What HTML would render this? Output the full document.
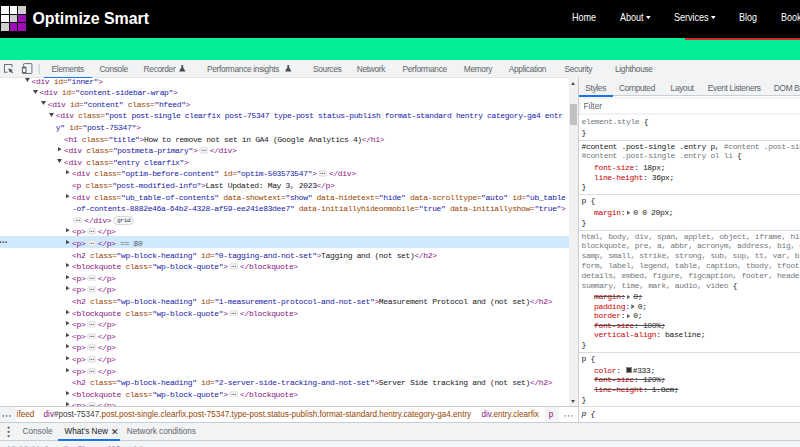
<!DOCTYPE html>
<html><head><meta charset="utf-8">
<style>
*{box-sizing:border-box}
html,body{margin:0;padding:0;width:800px;height:447px;overflow:hidden;background:#fff;position:relative;font-family:"Liberation Sans",sans-serif}
.abs{position:absolute}
#hdr{position:absolute;left:0;top:0;width:800px;height:38px;background:#000}
#green{position:absolute;left:0;top:38px;width:800px;height:22px;background:#03ec96}
#red{position:absolute;left:685px;top:38px;width:115px;height:2px;background:#d42a2a}
.logo{position:absolute;left:32.5px;top:7.8px;color:#fff;font-weight:bold;font-size:15.9px;line-height:22px;white-space:nowrap}
.nav{position:absolute;top:10.5px;color:#fff;font-size:10.1px;line-height:14px;white-space:nowrap;transform:scaleX(0.895);transform-origin:0 0}
.caret{position:absolute;top:16px;width:0;height:0;border-left:2.2px solid transparent;border-right:2.2px solid transparent;border-top:2.6px solid #fff}
#tool{position:absolute;left:0;top:60px;width:800px;height:17px;background:#f1f3f4}
#tline{position:absolute;left:0;top:77px;width:569px;height:1.3px;background:#e1e3e6}
.tb{position:absolute;top:63.8px;font-size:8.4px;letter-spacing:-0.33px;line-height:10px;color:#5f6368;white-space:nowrap}
.tb.act{color:#202124}
.flask{position:absolute;top:65.1px}
#elunder{position:absolute;left:44px;top:76.8px;width:48px;height:1.4px;background:#1a73e8}
#els{position:absolute;left:0;top:77px;width:569px;height:329px;overflow:hidden;background:#fff}
.row{position:absolute;height:11.5px;line-height:11.5px;font-family:"Liberation Mono",monospace;font-size:8.0px;letter-spacing:-0.3562px;white-space:pre;color:#202124}
.t{color:#881280} .a{color:#994500} .v{color:#1a1aa6} .x{color:#202124}
.hl{position:absolute;left:0;width:569px;height:11.6px;background:#cfe8fc}
.dots{position:absolute;left:1px;height:11.5px;line-height:10px;font-size:9px;color:#5f6368;letter-spacing:-0.5px}
.tri{position:absolute}
.tri.down{border-left:2.5px solid transparent;border-right:2.5px solid transparent;border-top:3.9px solid #5f6368;margin-top:2.6px;margin-left:-0.6px}
.tri.right{border-top:2.2px solid transparent;border-bottom:2.2px solid transparent;border-left:3.6px solid #5f6368;margin-top:2.2px;margin-left:0.3px}
.ell{display:inline-block;vertical-align:-0.6px;margin:0 1.6px 0 1.15px}
.badge{display:inline-block;box-sizing:border-box;width:21px;height:9.4px;line-height:8.4px;text-align:center;margin-left:2.05px;border:0.7px solid #d5d7db;background:#f8f9fa;border-radius:4.7px;font-size:6.2px;letter-spacing:-0.35px;color:#3c4043;vertical-align:1.2px}
.s0{color:#5f6368}
.s0 i{font-style:italic}
#sb{position:absolute;left:569px;top:77px;width:9px;height:329px;background:#f1f1f1}
#thumb{position:absolute;left:570px;top:104px;width:7px;height:21px;background:#c1c1c1}
.sbarr{position:absolute;left:571px;width:0;height:0;border-left:2.5px solid transparent;border-right:2.5px solid transparent}
#divider{position:absolute;left:578px;top:77px;width:1px;height:345px;background:#cacdd1}
#stabs{position:absolute;left:579px;top:77px;width:221px;height:19px;background:#f1f3f4;border-bottom:1px solid #cacdd1}
.st2{position:absolute;top:83.3px;font-size:8.4px;letter-spacing:-0.33px;line-height:10px;color:#5f6368;white-space:nowrap}
.st2.act{color:#202124}
#stunder{position:absolute;left:579px;top:95px;width:34px;height:2px;background:#1a73e8}
#filterrow{position:absolute;left:579px;top:97px;width:221px;height:18px;background:#f1f3f4}
#filter{position:absolute;left:580.5px;top:98.5px;width:230px;height:14.5px;background:#fff}
.ftxt{position:absolute;left:583.5px;top:101.2px;font-size:8.4px;line-height:10px;color:#5f6368}
#styles{position:absolute;left:579px;top:115px;width:221px;height:307px;background:#fff;overflow:hidden}
.srow{position:absolute;height:10px;line-height:10px;font-family:"Liberation Mono",monospace;font-size:8.0px;letter-spacing:-0.3562px;white-space:pre;color:#202124}
.sep{position:absolute;left:0;width:221px;height:1px;background:#dadce0}
.sd{color:#202124} .sg{color:#74787d}
.pn{color:#c80000}
.st{text-decoration:line-through;text-decoration-color:#4d5156;text-decoration-thickness:0.8px}
.arr{display:inline-block;width:3.5px;height:4.6px;margin:0 3.0px 0 1.7px;vertical-align:-0.2px;background:#5f6368;clip-path:polygon(0 0,100% 50%,0 100%)}
.sw{display:inline-block;width:6px;height:6px;background:#333;border:0.5px solid #888;margin:0 0.6px 0 1px;vertical-align:-0.5px}
#crumbs{position:absolute;left:0;top:406px;width:578px;height:16px;background:#fff;border-top:1px solid #cacdd1}
.cr{position:absolute;top:410.3px;font-size:8.15px;line-height:10px;white-space:nowrap}
#drawer{position:absolute;left:0;top:422px;width:800px;height:19px;background:#f1f3f4;border-top:1px solid #cacdd1;border-bottom:1px solid #cacdd1}
.dr{position:absolute;top:427.3px;font-size:8.2px;line-height:10px;color:#5f6368;white-space:nowrap}
#drunder{position:absolute;left:58px;top:439.3px;width:62px;height:1.8px;background:#1a73e8}
#below{position:absolute;left:0;top:441px;width:800px;height:6px;background:#f3f4f5}
</style></head><body>
<div id=hdr></div>
<div id=green></div>
<div id=red></div>
<div style="position:absolute;left:1.0px;top:6.0px;width:7.6px;height:7.6px;background:#fff"></div><div style="position:absolute;left:9.5px;top:6.0px;width:7.6px;height:7.6px;background:#fff"></div><div style="position:absolute;left:18.0px;top:6.0px;width:7.6px;height:7.6px;background:#cfcfcf"></div><div style="position:absolute;left:1.0px;top:14.5px;width:7.6px;height:7.6px;background:#fff"></div><div style="position:absolute;left:9.5px;top:14.5px;width:7.6px;height:7.6px;background:#cfcfcf"></div><div style="position:absolute;left:18.0px;top:14.5px;width:7.6px;height:7.6px;background:#a10cb9"></div><div style="position:absolute;left:1.0px;top:23.0px;width:7.6px;height:7.6px;background:#cfcfcf"></div><div style="position:absolute;left:9.5px;top:23.0px;width:7.6px;height:7.6px;background:#a10cb9"></div><div style="position:absolute;left:18.0px;top:23.0px;width:7.6px;height:7.6px;background:#a10cb9"></div>
<div class=logo>Optimize Smart</div>
<div class=nav style="left:572px">Home</div>
<div class=nav style="left:619.7px">About</div><svg style="position:absolute;left:645.8px;top:15.8px" width="5" height="4"><polygon points="0,0 4.6,0 2.3,3.3" fill="#fff"/></svg>
<div class=nav style="left:674px">Services</div><svg style="position:absolute;left:710.8px;top:15.8px" width="5" height="4"><polygon points="0,0 4.6,0 2.3,3.3" fill="#fff"/></svg>
<div class=nav style="left:739px">Blog</div>
<div class=nav style="left:780.8px">Book Consultation</div>
<div id=tool></div>
<svg style="position:absolute;left:0;top:60px" width="42" height="16" viewBox="0 60 42 16">
<path d="M7.5 72.3H4.5V64.5H11.2Q12 64.5 12 65.3V67.2" fill="none" stroke="#6d7175" stroke-width="1.05"/>
<path d="M8.3 68.3L13 69.9L11.3 70.6L13.2 72.5L12.4 73.3L10.5 71.4L9.9 73.1Z" fill="#4a4d51"/>
<path d="M23.6 66.6V64.2Q23.6 63.6 24.2 63.6H31.2Q31.9 63.6 31.9 64.3V72.9Q31.9 73.5 31.2 73.5H26" fill="none" stroke="#6d7175" stroke-width="1"/>
<rect x="22.4" y="67.1" width="3.6" height="6.1" rx="0.6" fill="none" stroke="#4a4d51" stroke-width="0.9"/>
<rect x="22.4" y="67.1" width="3.6" height="1.2" fill="#4a4d51"/><rect x="22.4" y="72.2" width="3.6" height="1.1" fill="#4a4d51"/>
<rect x="38.7" y="63.5" width="0.8" height="10.5" fill="#b9bcc0"/>
</svg>
<div class=tb act style="left:51.6px">Elements</div><div class=tb style="left:99.4px">Console</div><div class=tb style="left:143.6px">Recorder</div><svg class=flask viewBox="0 0 7 7" width="6.5" height="6.5" style="left:179.2px"><path d="M2.2 0.3h2.6v0.6h-0.4v1.9l2.3 3.6v0.6h-6.4v-0.6l2.3-3.6v-1.9h-0.4z" fill="#44474b"/></svg><div class=tb style="left:207px">Performance insights</div><svg class=flask viewBox="0 0 7 7" width="6.5" height="6.5" style="left:285.2px"><path d="M2.2 0.3h2.6v0.6h-0.4v1.9l2.3 3.6v0.6h-6.4v-0.6l2.3-3.6v-1.9h-0.4z" fill="#44474b"/></svg><div class=tb style="left:313px">Sources</div><div class=tb style="left:356.75px">Network</div><div class=tb style="left:402.5px">Performance</div><div class=tb style="left:463.75px">Memory</div><div class=tb style="left:508.75px">Application</div><div class=tb style="left:564.5px">Security</div><div class=tb style="left:615px">Lighthouse</div>
<div id=els>
<svg class=tri style="top:1.09px;left:24.80px" width="6" height="5" viewBox="0 0 6 5"><polygon points="0,0 5,0 2.5,4" fill="#44474b"/></svg>
<div class=row style="top:-1.31px;left:31.50px"><span class=t>&lt;div</span> <span class=a>id</span><span class=a>=</span><span class=v>&quot;inner&quot;</span><span class=t>&gt;</span></div>
<svg class=tri style="top:12.69px;left:32.92px" width="6" height="5" viewBox="0 0 6 5"><polygon points="0,0 5,0 2.5,4" fill="#44474b"/></svg>
<div class=row style="top:10.29px;left:39.62px"><span class=t>&lt;div</span> <span class=a>id</span><span class=a>=</span><span class=v>&quot;content-sidebar-wrap&quot;</span><span class=t>&gt;</span></div>
<svg class=tri style="top:24.29px;left:41.04px" width="6" height="5" viewBox="0 0 6 5"><polygon points="0,0 5,0 2.5,4" fill="#44474b"/></svg>
<div class=row style="top:21.89px;left:47.74px"><span class=t>&lt;div</span> <span class=a>id</span><span class=a>=</span><span class=v>&quot;content&quot;</span> <span class=a>class</span><span class=a>=</span><span class=v>&quot;hfeed&quot;</span><span class=t>&gt;</span></div>
<svg class=tri style="top:35.89px;left:49.16px" width="6" height="5" viewBox="0 0 6 5"><polygon points="0,0 5,0 2.5,4" fill="#44474b"/></svg>
<div class=row style="top:33.49px;left:55.86px"><span class=t>&lt;div</span> <span class=a>class</span><span class=a>=</span><span class=v>&quot;post post-single clearfix post-75347 type-post status-publish format-standard hentry category-ga4 entr</span></div>
<div class=row style="top:45.09px;left:55.86px"><span class=v>y&quot;</span> <span class=a>id</span><span class=a>=</span><span class=v>&quot;post-75347&quot;</span><span class=t>&gt;</span></div>
<div class=row style="top:56.69px;left:63.98px"><span class=t>&lt;h1</span> <span class=a>class</span><span class=a>=</span><span class=v>&quot;title&quot;</span><span class=t>&gt;</span><span class=x>How to remove not set in GA4 (Google Analytics 4)</span><span class=t>&lt;/h1&gt;</span></div>
<svg class=tri style="top:70.29px;left:58.28px" width="5" height="6" viewBox="0 0 5 6"><polygon points="0,0 3.6,2.15 0,4.3" fill="#44474b"/></svg>
<div class=row style="top:68.29px;left:63.98px"><span class=t>&lt;div</span> <span class=a>class</span><span class=a>=</span><span class=v>&quot;postmeta-primary&quot;</span><span class=t>&gt;</span><svg class=ell width="9.6" height="6.6" viewBox="0 0 9.6 6.6"><rect x="0.35" y="0.35" width="8.9" height="5.9" rx="2.95" fill="#f1f3f4" stroke="#d5d7db" stroke-width="0.7"/><circle cx="3.1" cy="3.3" r="0.62" fill="#5f6368"/><circle cx="4.8" cy="3.3" r="0.62" fill="#5f6368"/><circle cx="6.5" cy="3.3" r="0.62" fill="#5f6368"/></svg><span class=t>&lt;/div&gt;</span></div>
<svg class=tri style="top:82.29px;left:57.28px" width="6" height="5" viewBox="0 0 6 5"><polygon points="0,0 5,0 2.5,4" fill="#44474b"/></svg>
<div class=row style="top:79.89px;left:63.98px"><span class=t>&lt;div</span> <span class=a>class</span><span class=a>=</span><span class=v>&quot;entry clearfix&quot;</span><span class=t>&gt;</span></div>
<svg class=tri style="top:93.49px;left:66.40px" width="5" height="6" viewBox="0 0 5 6"><polygon points="0,0 3.6,2.15 0,4.3" fill="#44474b"/></svg>
<div class=row style="top:91.49px;left:72.10px"><span class=t>&lt;div</span> <span class=a>class</span><span class=a>=</span><span class=v>&quot;optim-before-content&quot;</span> <span class=a>id</span><span class=a>=</span><span class=v>&quot;optim-503573547&quot;</span><span class=t>&gt;</span><svg class=ell width="9.6" height="6.6" viewBox="0 0 9.6 6.6"><rect x="0.35" y="0.35" width="8.9" height="5.9" rx="2.95" fill="#f1f3f4" stroke="#d5d7db" stroke-width="0.7"/><circle cx="3.1" cy="3.3" r="0.62" fill="#5f6368"/><circle cx="4.8" cy="3.3" r="0.62" fill="#5f6368"/><circle cx="6.5" cy="3.3" r="0.62" fill="#5f6368"/></svg><span class=t>&lt;/div&gt;</span></div>
<div class=row style="top:103.09px;left:72.10px"><span class=t>&lt;p</span> <span class=a>class</span><span class=a>=</span><span class=v>&quot;post-modified-info&quot;</span><span class=t>&gt;</span><span class=x>Last Updated: May 3, 2023</span><span class=t>&lt;/p&gt;</span></div>
<svg class=tri style="top:116.69px;left:66.40px" width="5" height="6" viewBox="0 0 5 6"><polygon points="0,0 3.6,2.15 0,4.3" fill="#44474b"/></svg>
<div class=row style="top:114.69px;left:72.10px"><span class=t>&lt;div</span> <span class=a>class</span><span class=a>=</span><span class=v>&quot;ub_table-of-contents&quot;</span> <span class=a>data-showtext</span><span class=a>=</span><span class=v>&quot;show&quot;</span> <span class=a>data-hidetext</span><span class=a>=</span><span class=v>&quot;hide&quot;</span> <span class=a>data-scrolltype</span><span class=a>=</span><span class=v>&quot;auto&quot;</span> <span class=a>id</span><span class=a>=</span><span class=v>&quot;ub_table</span></div>
<div class=row style="top:126.29px;left:72.10px"><span class=v>-of-contents-8882e46a-64b2-4328-af59-ee241e83dee7&quot;</span> <span class=a>data-initiallyhideonmobile</span><span class=a>=</span><span class=v>&quot;true&quot;</span> <span class=a>data-initiallyshow</span><span class=a>=</span><span class=v>&quot;true&quot;</span><span class=t>&gt;</span></div>
<div class=row style="top:137.89px;left:72.10px"><svg class=ell width="9.6" height="6.6" viewBox="0 0 9.6 6.6"><rect x="0.35" y="0.35" width="8.9" height="5.9" rx="2.95" fill="#f1f3f4" stroke="#d5d7db" stroke-width="0.7"/><circle cx="3.1" cy="3.3" r="0.62" fill="#5f6368"/><circle cx="4.8" cy="3.3" r="0.62" fill="#5f6368"/><circle cx="6.5" cy="3.3" r="0.62" fill="#5f6368"/></svg><span class=t>&lt;/div&gt;</span><span class=badge>grid</span></div>
<svg class=tri style="top:151.49px;left:66.40px" width="5" height="6" viewBox="0 0 5 6"><polygon points="0,0 3.6,2.15 0,4.3" fill="#44474b"/></svg>
<div class=row style="top:149.49px;left:72.10px"><span class=t>&lt;p&gt;</span><svg class=ell width="9.6" height="6.6" viewBox="0 0 9.6 6.6"><rect x="0.35" y="0.35" width="8.9" height="5.9" rx="2.95" fill="#f1f3f4" stroke="#d5d7db" stroke-width="0.7"/><circle cx="3.1" cy="3.3" r="0.62" fill="#5f6368"/><circle cx="4.8" cy="3.3" r="0.62" fill="#5f6368"/><circle cx="6.5" cy="3.3" r="0.62" fill="#5f6368"/></svg><span class=t>&lt;/p&gt;</span></div>
<div class=hl style="top:159.39px"></div>
<svg style="position:absolute;left:0;top:164.30px" width="8" height="3"><rect x="-0.2" y="0.3" width="1.5" height="1.7" fill="#5a5e62"/><rect x="2.6" y="0.3" width="1.5" height="1.7" fill="#5a5e62"/><rect x="5.3" y="0.3" width="1.5" height="1.7" fill="#5a5e62"/></svg>
<svg class=tri style="top:163.09px;left:66.40px" width="5" height="6" viewBox="0 0 5 6"><polygon points="0,0 3.6,2.15 0,4.3" fill="#44474b"/></svg>
<div class=row style="top:161.09px;left:72.10px"><span class=t>&lt;p&gt;</span><svg class=ell width="9.6" height="6.6" viewBox="0 0 9.6 6.6"><rect x="0.35" y="0.35" width="8.9" height="5.9" rx="2.95" fill="#f1f3f4" stroke="#d5d7db" stroke-width="0.7"/><circle cx="3.1" cy="3.3" r="0.62" fill="#5f6368"/><circle cx="4.8" cy="3.3" r="0.62" fill="#5f6368"/><circle cx="6.5" cy="3.3" r="0.62" fill="#5f6368"/></svg><span class=t>&lt;/p&gt;</span> <span class=s0>== <i>$0</i></span></div>
<div class=row style="top:172.69px;left:72.10px"><span class=t>&lt;h2</span> <span class=a>class</span><span class=a>=</span><span class=v>&quot;wp-block-heading&quot;</span> <span class=a>id</span><span class=a>=</span><span class=v>&quot;0-tagging-and-not-set&quot;</span><span class=t>&gt;</span><span class=x>Tagging and (not set)</span><span class=t>&lt;/h2&gt;</span></div>
<svg class=tri style="top:186.29px;left:66.40px" width="5" height="6" viewBox="0 0 5 6"><polygon points="0,0 3.6,2.15 0,4.3" fill="#44474b"/></svg>
<div class=row style="top:184.29px;left:72.10px"><span class=t>&lt;blockquote</span> <span class=a>class</span><span class=a>=</span><span class=v>&quot;wp-block-quote&quot;</span><span class=t>&gt;</span><svg class=ell width="9.6" height="6.6" viewBox="0 0 9.6 6.6"><rect x="0.35" y="0.35" width="8.9" height="5.9" rx="2.95" fill="#f1f3f4" stroke="#d5d7db" stroke-width="0.7"/><circle cx="3.1" cy="3.3" r="0.62" fill="#5f6368"/><circle cx="4.8" cy="3.3" r="0.62" fill="#5f6368"/><circle cx="6.5" cy="3.3" r="0.62" fill="#5f6368"/></svg><span class=t>&lt;/blockquote&gt;</span></div>
<svg class=tri style="top:197.89px;left:66.40px" width="5" height="6" viewBox="0 0 5 6"><polygon points="0,0 3.6,2.15 0,4.3" fill="#44474b"/></svg>
<div class=row style="top:195.89px;left:72.10px"><span class=t>&lt;p&gt;</span><svg class=ell width="9.6" height="6.6" viewBox="0 0 9.6 6.6"><rect x="0.35" y="0.35" width="8.9" height="5.9" rx="2.95" fill="#f1f3f4" stroke="#d5d7db" stroke-width="0.7"/><circle cx="3.1" cy="3.3" r="0.62" fill="#5f6368"/><circle cx="4.8" cy="3.3" r="0.62" fill="#5f6368"/><circle cx="6.5" cy="3.3" r="0.62" fill="#5f6368"/></svg><span class=t>&lt;/p&gt;</span></div>
<svg class=tri style="top:209.49px;left:66.40px" width="5" height="6" viewBox="0 0 5 6"><polygon points="0,0 3.6,2.15 0,4.3" fill="#44474b"/></svg>
<div class=row style="top:207.49px;left:72.10px"><span class=t>&lt;p&gt;</span><svg class=ell width="9.6" height="6.6" viewBox="0 0 9.6 6.6"><rect x="0.35" y="0.35" width="8.9" height="5.9" rx="2.95" fill="#f1f3f4" stroke="#d5d7db" stroke-width="0.7"/><circle cx="3.1" cy="3.3" r="0.62" fill="#5f6368"/><circle cx="4.8" cy="3.3" r="0.62" fill="#5f6368"/><circle cx="6.5" cy="3.3" r="0.62" fill="#5f6368"/></svg><span class=t>&lt;/p&gt;</span></div>
<div class=row style="top:219.09px;left:72.10px"><span class=t>&lt;h2</span> <span class=a>class</span><span class=a>=</span><span class=v>&quot;wp-block-heading&quot;</span> <span class=a>id</span><span class=a>=</span><span class=v>&quot;1-measurement-protocol-and-not-set&quot;</span><span class=t>&gt;</span><span class=x>Measurement Protocol and (not set)</span><span class=t>&lt;/h2&gt;</span></div>
<svg class=tri style="top:232.69px;left:66.40px" width="5" height="6" viewBox="0 0 5 6"><polygon points="0,0 3.6,2.15 0,4.3" fill="#44474b"/></svg>
<div class=row style="top:230.69px;left:72.10px"><span class=t>&lt;blockquote</span> <span class=a>class</span><span class=a>=</span><span class=v>&quot;wp-block-quote&quot;</span><span class=t>&gt;</span><svg class=ell width="9.6" height="6.6" viewBox="0 0 9.6 6.6"><rect x="0.35" y="0.35" width="8.9" height="5.9" rx="2.95" fill="#f1f3f4" stroke="#d5d7db" stroke-width="0.7"/><circle cx="3.1" cy="3.3" r="0.62" fill="#5f6368"/><circle cx="4.8" cy="3.3" r="0.62" fill="#5f6368"/><circle cx="6.5" cy="3.3" r="0.62" fill="#5f6368"/></svg><span class=t>&lt;/blockquote&gt;</span></div>
<svg class=tri style="top:244.29px;left:66.40px" width="5" height="6" viewBox="0 0 5 6"><polygon points="0,0 3.6,2.15 0,4.3" fill="#44474b"/></svg>
<div class=row style="top:242.29px;left:72.10px"><span class=t>&lt;p&gt;</span><svg class=ell width="9.6" height="6.6" viewBox="0 0 9.6 6.6"><rect x="0.35" y="0.35" width="8.9" height="5.9" rx="2.95" fill="#f1f3f4" stroke="#d5d7db" stroke-width="0.7"/><circle cx="3.1" cy="3.3" r="0.62" fill="#5f6368"/><circle cx="4.8" cy="3.3" r="0.62" fill="#5f6368"/><circle cx="6.5" cy="3.3" r="0.62" fill="#5f6368"/></svg><span class=t>&lt;/p&gt;</span></div>
<svg class=tri style="top:255.89px;left:66.40px" width="5" height="6" viewBox="0 0 5 6"><polygon points="0,0 3.6,2.15 0,4.3" fill="#44474b"/></svg>
<div class=row style="top:253.89px;left:72.10px"><span class=t>&lt;p&gt;</span><svg class=ell width="9.6" height="6.6" viewBox="0 0 9.6 6.6"><rect x="0.35" y="0.35" width="8.9" height="5.9" rx="2.95" fill="#f1f3f4" stroke="#d5d7db" stroke-width="0.7"/><circle cx="3.1" cy="3.3" r="0.62" fill="#5f6368"/><circle cx="4.8" cy="3.3" r="0.62" fill="#5f6368"/><circle cx="6.5" cy="3.3" r="0.62" fill="#5f6368"/></svg><span class=t>&lt;/p&gt;</span></div>
<svg class=tri style="top:267.49px;left:66.40px" width="5" height="6" viewBox="0 0 5 6"><polygon points="0,0 3.6,2.15 0,4.3" fill="#44474b"/></svg>
<div class=row style="top:265.49px;left:72.10px"><span class=t>&lt;p&gt;</span><svg class=ell width="9.6" height="6.6" viewBox="0 0 9.6 6.6"><rect x="0.35" y="0.35" width="8.9" height="5.9" rx="2.95" fill="#f1f3f4" stroke="#d5d7db" stroke-width="0.7"/><circle cx="3.1" cy="3.3" r="0.62" fill="#5f6368"/><circle cx="4.8" cy="3.3" r="0.62" fill="#5f6368"/><circle cx="6.5" cy="3.3" r="0.62" fill="#5f6368"/></svg><span class=t>&lt;/p&gt;</span></div>
<svg class=tri style="top:279.09px;left:66.40px" width="5" height="6" viewBox="0 0 5 6"><polygon points="0,0 3.6,2.15 0,4.3" fill="#44474b"/></svg>
<div class=row style="top:277.09px;left:72.10px"><span class=t>&lt;p&gt;</span><svg class=ell width="9.6" height="6.6" viewBox="0 0 9.6 6.6"><rect x="0.35" y="0.35" width="8.9" height="5.9" rx="2.95" fill="#f1f3f4" stroke="#d5d7db" stroke-width="0.7"/><circle cx="3.1" cy="3.3" r="0.62" fill="#5f6368"/><circle cx="4.8" cy="3.3" r="0.62" fill="#5f6368"/><circle cx="6.5" cy="3.3" r="0.62" fill="#5f6368"/></svg><span class=t>&lt;/p&gt;</span></div>
<svg class=tri style="top:290.69px;left:66.40px" width="5" height="6" viewBox="0 0 5 6"><polygon points="0,0 3.6,2.15 0,4.3" fill="#44474b"/></svg>
<div class=row style="top:288.69px;left:72.10px"><span class=t>&lt;p&gt;</span><svg class=ell width="9.6" height="6.6" viewBox="0 0 9.6 6.6"><rect x="0.35" y="0.35" width="8.9" height="5.9" rx="2.95" fill="#f1f3f4" stroke="#d5d7db" stroke-width="0.7"/><circle cx="3.1" cy="3.3" r="0.62" fill="#5f6368"/><circle cx="4.8" cy="3.3" r="0.62" fill="#5f6368"/><circle cx="6.5" cy="3.3" r="0.62" fill="#5f6368"/></svg><span class=t>&lt;/p&gt;</span></div>
<div class=row style="top:300.29px;left:72.10px"><span class=t>&lt;h2</span> <span class=a>class</span><span class=a>=</span><span class=v>&quot;wp-block-heading&quot;</span> <span class=a>id</span><span class=a>=</span><span class=v>&quot;2-server-side-tracking-and-not-set&quot;</span><span class=t>&gt;</span><span class=x>Server Side tracking and (not set)</span><span class=t>&lt;/h2&gt;</span></div>
<svg class=tri style="top:313.89px;left:66.40px" width="5" height="6" viewBox="0 0 5 6"><polygon points="0,0 3.6,2.15 0,4.3" fill="#44474b"/></svg>
<div class=row style="top:311.89px;left:72.10px"><span class=t>&lt;blockquote</span> <span class=a>class</span><span class=a>=</span><span class=v>&quot;wp-block-quote&quot;</span><span class=t>&gt;</span><svg class=ell width="9.6" height="6.6" viewBox="0 0 9.6 6.6"><rect x="0.35" y="0.35" width="8.9" height="5.9" rx="2.95" fill="#f1f3f4" stroke="#d5d7db" stroke-width="0.7"/><circle cx="3.1" cy="3.3" r="0.62" fill="#5f6368"/><circle cx="4.8" cy="3.3" r="0.62" fill="#5f6368"/><circle cx="6.5" cy="3.3" r="0.62" fill="#5f6368"/></svg><span class=t>&lt;/blockquote&gt;</span></div>
<svg class=tri style="top:325.49px;left:66.40px" width="5" height="6" viewBox="0 0 5 6"><polygon points="0,0 3.6,2.15 0,4.3" fill="#44474b"/></svg>
<div class=row style="top:323.49px;left:72.10px"><span class=t>&lt;p&gt;</span><svg class=ell width="9.6" height="6.6" viewBox="0 0 9.6 6.6"><rect x="0.35" y="0.35" width="8.9" height="5.9" rx="2.95" fill="#f1f3f4" stroke="#d5d7db" stroke-width="0.7"/><circle cx="3.1" cy="3.3" r="0.62" fill="#5f6368"/><circle cx="4.8" cy="3.3" r="0.62" fill="#5f6368"/><circle cx="6.5" cy="3.3" r="0.62" fill="#5f6368"/></svg><span class=t>&lt;/p&gt;</span></div>
</div>
<div id=tline></div>
<div id=elunder></div>
<div id=sb></div><div id=thumb></div>
<div class=sbarr style="top:81.5px;border-bottom:3px solid #505050"></div>
<div class=sbarr style="top:399.5px;border-top:3px solid #505050"></div>
<div id=divider></div>
<div id=stabs></div>
<div class=st2 act style="left:585.2px">Styles</div><div class=st2 style="left:619px">Computed</div><div class=st2 style="left:670.6px">Layout</div><div class=st2 style="left:707.8px">Event Listeners</div><div class=st2 style="left:773.8px">DOM Breakpoints</div>
<div id=stunder></div>
<div id=filterrow></div><div id=filter></div><div class=ftxt>Filter</div>
<div id=styles>
<div class=sep style="top:24.60px"></div><div class=sep style="top:79.24px"></div><div class=sep style="top:114.51px"></div><div class=sep style="top:237.04px"></div><div class=sep style="top:291.49px"></div>
<div class=srow style="top:1.61px;left:2.5px"><span class=sg>element.style</span> <span class=sd>{</span></div>
<div class=srow style="top:12.80px;left:2.5px"><span class=sd>}</span></div>
<div class=srow style="top:26.71px;left:2.5px"><span class=sd>#content .post-single .entry p,</span> <span class=sg>#content .post-single .entry ol li,</span></div>
<div class=srow style="top:36.49px;left:2.5px"><span class=sg>#content .post-single .entry ol li</span> <span class=sd>{</span></div>
<div class=srow style="top:48.07px;left:15px"><span class="pr"><span class=pn>font-size</span>: 18px;</span></div>
<div class=srow style="top:57.66px;left:15px"><span class="pr"><span class=pn>line-height</span>: 36px;</span></div>
<div class=srow style="top:67.44px;left:2.5px"><span class=sd>}</span></div>
<div class=srow style="top:81.35px;left:2.5px"><span class=sd>p {</span></div>
<div class=srow style="top:92.93px;left:15px"><span class="pr"><span class=pn>margin</span>:<span class=arr></span>0 0 20px;</span></div>
<div class=srow style="top:102.71px;left:2.5px"><span class=sd>}</span></div>
<div class=srow style="top:116.62px;left:2.5px"><span class=sg>html, body, div, span, applet, object, iframe, h1, h2, h3, h4, h5, h6, p,</span></div>
<div class=srow style="top:126.40px;left:2.5px"><span class=sg>blockquote, pre, a, abbr, acronym, address, big, cite, code,</span></div>
<div class=srow style="top:136.18px;left:2.5px"><span class=sg>samp, small, strike, strong, sub, sup, tt, var, b, u, i, center,</span></div>
<div class=srow style="top:145.96px;left:2.5px"><span class=sg>form, label, legend, table, caption, tbody, tfoot, thead, tr, th, td,</span></div>
<div class=srow style="top:155.74px;left:2.5px"><span class=sg>details, embed, figure, figcaption, footer, header, hgroup,</span></div>
<div class=srow style="top:165.52px;left:2.5px"><span class=sg>summary, time, mark, audio, video</span> <span class=sd>{</span></div>
<div class=srow style="top:177.10px;left:15px"><span class="pr st"><span class=pn>margin</span>:<span class=arr></span>0;</span></div>
<div class=srow style="top:186.69px;left:15px"><span class="pr"><span class=pn>padding</span>:<span class=arr></span>0;</span></div>
<div class=srow style="top:196.28px;left:15px"><span class="pr"><span class=pn>border</span>:<span class=arr></span>0;</span></div>
<div class=srow style="top:205.87px;left:15px"><span class="pr st"><span class=pn>font-size</span>: 100%;</span></div>
<div class=srow style="top:215.46px;left:15px"><span class="pr"><span class=pn>vertical-align</span>: baseline;</span></div>
<div class=srow style="top:225.24px;left:2.5px"><span class=sd>}</span></div>
<div class=srow style="top:239.15px;left:2.5px"><span class=sd>p {</span></div>
<div class=srow style="top:250.73px;left:15px"><span class="pr"><span class=pn>color</span>: <span class=sw></span>#333;</span></div>
<div class=srow style="top:260.32px;left:15px"><span class="pr st"><span class=pn>font-size</span>: 120%;</span></div>
<div class=srow style="top:269.91px;left:15px"><span class="pr st"><span class=pn>line-height</span>: 1.8em;</span></div>
<div class=srow style="top:279.69px;left:2.5px"><span class=sd>}</span></div>
<div class=srow style="top:293.60px;left:2.5px"><i class=sd>p {</i></div>
</div>
<div id=crumbs></div>
<div class=cr style="left:0;top:407px;width:16px;height:15px;background:#f1f3f4"></div>
<svg style="position:absolute;left:2px;top:415px" width="10" height="3"><rect x="0.6" y="0.2" width="1.4" height="1.5" fill="#5f6368"/><rect x="3.9" y="0.2" width="1.4" height="1.5" fill="#5f6368"/><rect x="7.2" y="0.2" width="1.4" height="1.5" fill="#5f6368"/></svg>
<div class=cr style="left:16.6px;color:#994500">ifeed</div>
<div class=cr style="left:43.6px"><span style="color:#881280">div</span><span style="color:#3c4043">#post-75347</span><span style="color:#994500">.post.post-single.clearfix.post-75347.type-post.status-publish.format-standard.hentry.category-ga4.entry</span></div>
<div class=cr style="left:481.4px"><span style="color:#881280">div</span><span style="color:#994500">.entry.clearfix</span></div>
<div class=cr style="left:544.5px;top:407px;width:14px;height:15px;background:#f1f3f4"></div>
<div class=cr style="left:548.8px;color:#881280">p</div>
<svg style="position:absolute;left:563.5px;top:415px" width="10" height="3"><rect x="0.6" y="0.2" width="1.3" height="1.3" fill="#80868b"/><rect x="3.9" y="0.2" width="1.3" height="1.3" fill="#80868b"/><rect x="7.2" y="0.2" width="1.3" height="1.3" fill="#80868b"/></svg>
<div id=drawer></div>
<svg style="position:absolute;left:7px;top:426px" width="4" height="12"><circle cx="1.6" cy="1.7" r="1.1" fill="#5f6368"/><circle cx="1.6" cy="5.9" r="1.1" fill="#5f6368"/><circle cx="1.6" cy="10.1" r="1.1" fill="#5f6368"/></svg>
<div class=dr style="left:22.5px">Console</div>
<div class=dr style="left:64.5px;color:#202124">What's New</div>
<div class=dr style="left:111px;color:#202124;font-size:9px">&#10005;</div>
<div class=dr style="left:126.75px">Network conditions</div>
<div id=drunder></div>
<div id=below></div>
<div style="position:absolute;left:8px;top:443.8px;font-size:8px;line-height:10px;color:#80868b;white-space:nowrap">Highlights from the Chrome 113 update</div>
</body></html>
